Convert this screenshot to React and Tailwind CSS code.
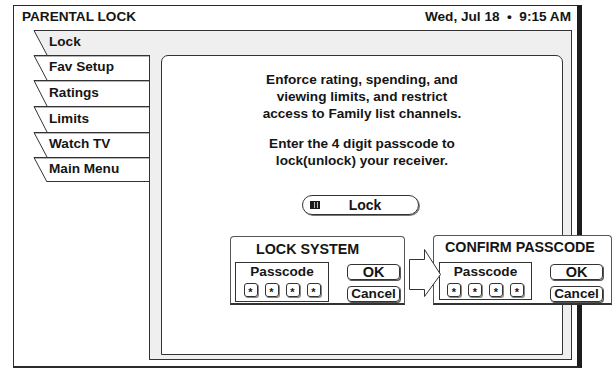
import React from 'react';

const LINE = '#333';
const PANEL = '#eeefee';

const tabs = [
  { label: 'Fav Setup', h: 25 },
  { label: 'Ratings', h: 26 },
  { label: 'Limits', h: 26 },
  { label: 'Watch TV', h: 25 },
  { label: 'Main Menu', h: 25, last: true },
];

const Tab = ({ label, h, active, last }) => {
  const w = active ? 117 : 116;
  return (
    <div className="relative flex items-center pl-[16px] shrink-0" style={{ height: h }}>
      <svg className="absolute left-0 top-0" width={w} height={h}>
        <polygon points={`1,0.5 ${w},0.5 ${w},${h} 14,${h}`} fill={active ? PANEL : '#fff'} />
        <path d={`M1,0.5 L${w},0.5 M1,0.5 L14,${h}`} stroke={LINE} strokeWidth="1" fill="none" />
        {!active && <path d={`M2,1.5 L${w},1.5`} stroke="#b5b5b5" strokeWidth="1" />}
        {last && <path d={`M14,${h - 0.5} L${w},${h - 0.5}`} stroke={LINE} strokeWidth="1" />}
      </svg>
      <span className="relative">{label}</span>
    </div>
  );
};

const Star = () => (
  <div className="w-[14px] h-[14px] rounded-[3px] border border-[#333] flex items-center justify-center shadow-[1px_1px_0_#888]">
    <span className="text-[11px] leading-none translate-y-[2px]">*</span>
  </div>
);

const Btn = ({ children, size }) => (
  <div className={`h-[16px] rounded-[4px] border border-[#333] shadow-[1px_1px_0_#555] flex items-center justify-center leading-none ${size}`}>
    {children}
  </div>
);

const Dialog = ({ title, className, titleCls, boxCls, rowCls }) => (
  <div className={`absolute bg-white border border-[#555] border-b-2 border-b-[#333] rounded-t-[4px] ${className}`}>
    <div className={`text-[14.3px] leading-[17px] whitespace-nowrap ${titleCls}`}>{title}</div>
    <div className={`flex items-start ${rowCls}`}>
      <div className={`border border-[#333] flex flex-col items-center ${boxCls}`}>
        <div className="text-[13.6px] leading-[15px] pt-[1px]">Passcode</div>
        <div className="flex gap-[7px] mt-[4px]">
          <Star />
          <Star />
          <Star />
          <Star />
        </div>
      </div>
      <div className="ml-[18px] w-[53px] flex flex-col gap-[6px] pt-[2px]">
        <Btn size="text-[14.5px]">OK</Btn>
        <Btn size="text-[13.6px]">Cancel</Btn>
      </div>
    </div>
  </div>
);

export default function App() {
  return (
    <div className="relative w-[613px] h-[369px] bg-white overflow-hidden font-['Liberation_Sans',Arial,sans-serif] font-bold text-[#151515]">
      <div className="mt-[5px] ml-[13px] w-[569px] h-[363px] border-l border-t border-[#2b2b2b] border-r-[5px] border-r-[#1c1c1c] border-b-2 border-b-[#2b2b2b] flex flex-col">
        {/* title bar */}
        <div className="h-[24px] shrink-0 flex justify-between items-start pl-[8px] pr-[6px] pt-[3px] text-[13.6px] leading-[16px]">
          <span>PARENTAL LOCK</span>
          <span>Wed, Jul 18 &nbsp;•&nbsp; 9:15 AM</span>
        </div>

        <div className="flex h-[330px] shrink-0">
          {/* menu tabs */}
          <div className="w-[136px] shrink-0 flex flex-col pl-[19px] text-[13.6px]">
            <Tab label="Lock" h={25} active />
            <div className="flex-1 flex flex-col border-r border-[#333]">
              {tabs.map(t => (
                <Tab key={t.label} {...t} />
              ))}
            </div>
          </div>

          {/* grey panel */}
          <div className="flex-1 mr-[5px] bg-[#eeefee] border-t border-r border-b border-[#333] pl-[11px] pt-[24px] pr-[8px] pb-[4px]">
            <div className="h-full bg-white border border-[#333] rounded-t-[7px] flex flex-col pt-[15px] text-[13.6px] leading-[17px] text-center">
              <p>
                Enforce rating, spending, and
                <br />
                viewing limits, and restrict
                <br />
                access to Family list channels.
              </p>
              <p className="mt-[13px]">
                Enter the 4 digit passcode to
                <br />
                lock(unlock) your receiver.
              </p>
              <div className="mt-[26px] ml-[140px] w-[117px] h-[20px] rounded-full border border-[#333] shadow-[1px_1px_0_#777] flex items-center pl-[7px]">
                <svg width="10" height="8" viewBox="0 0 10 8">
                  <rect x="0" y="0" width="10" height="8" fill="#1a1a1a" />
                  <rect x="4" y="1" width="1" height="6" fill="#bbb" />
                  <rect x="7" y="1" width="1" height="6" fill="#bbb" />
                </svg>
                <span className="flex-1 text-center text-[14px] leading-none pr-[8px]">Lock</span>
              </div>
            </div>
          </div>
        </div>
      </div>

      <Dialog
        title="LOCK SYSTEM"
        className="left-[230px] top-[236px] w-[175px] h-[69px]"
        titleCls="pl-[25px] pt-[4px]"
        rowCls="mt-[4px] pl-[4px]"
        boxCls="w-[94px] h-[40px]"
      />
      <Dialog
        title="CONFIRM PASSCODE"
        className="left-[433px] top-[235px] w-[179px] h-[70px]"
        titleCls="pl-[11px] pt-[3px]"
        rowCls="mt-[6px] pl-[5px]"
        boxCls="w-[93px] h-[38px]"
      />

      {/* arrow between dialogs */}
      <svg className="absolute left-[405px] top-[245px]" width="38" height="58">
        <polygon
          points="4.5,14.5 19.5,14.5 19.5,4.5 35.5,29.5 19.5,51.5 19.5,44.5 4.5,44.5"
          fill="#fff"
          stroke="#333"
          strokeWidth="1"
        />
      </svg>
    </div>
  );
}
